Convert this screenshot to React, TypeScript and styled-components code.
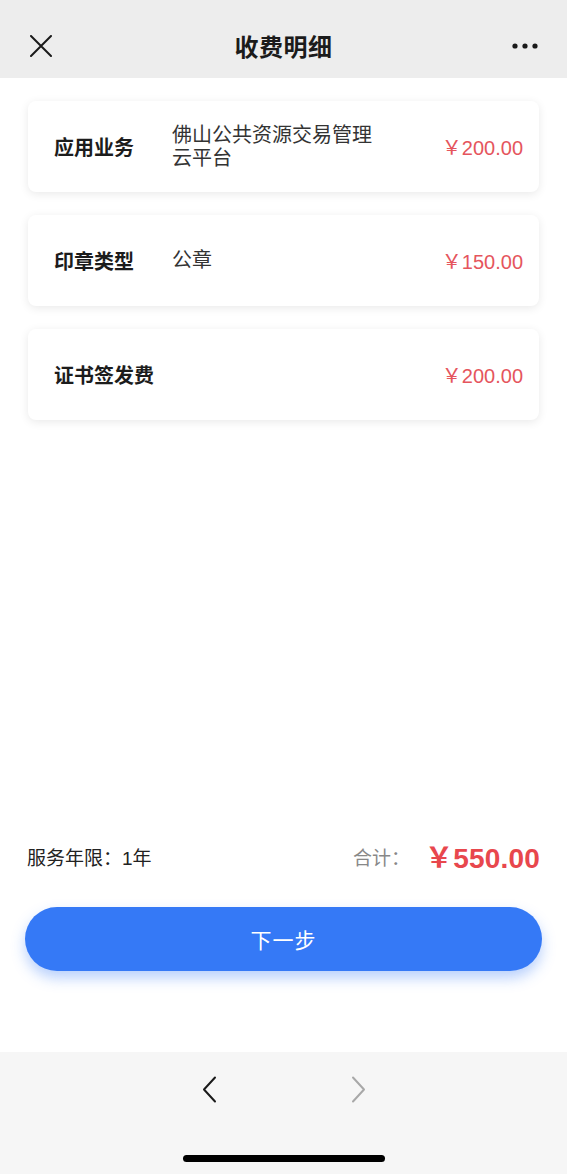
import React from "react";
import styled, { createGlobalStyle } from "styled-components";

const GlobalStyle = createGlobalStyle`
  html, body { margin: 0; padding: 0; background: #ffffff; }
  body { font-family: "Liberation Sans", "Noto Sans CJK SC", sans-serif; }
  * { box-sizing: border-box; }
`;

const Page = styled.div`
  width: 567px;
  height: 1174px;
  display: flex;
  flex-direction: column;
  background: #ffffff;
  overflow: hidden;
`;

const Header = styled.header`
  height: 78px;
  flex: none;
  background: #ededed;
  display: grid;
  grid-template-columns: 80px 1fr 80px;
  align-items: center;
  padding-top: 13px;
`;

const IconSlot = styled.div<{ $align: "start" | "end" }>`
  display: flex;
  justify-content: ${(p) => (p.$align === "start" ? "flex-start" : "flex-end")};
  align-items: center;
  padding-left: ${(p) => (p.$align === "start" ? "30px" : "0")};
  padding-right: ${(p) => (p.$align === "end" ? "28px" : "0")};
`;

const Title = styled.h1`
  margin: 0;
  text-align: center;
  font-size: 24px;
  font-weight: 700;
  color: #1b1b1b;
  letter-spacing: 0.5px;
`;

const Main = styled.main`
  flex: 1;
  padding: 23px 28px 0;
  display: flex;
  flex-direction: column;
  gap: 23px;
`;

const Card = styled.div`
  height: 91px;
  background: #ffffff;
  border-radius: 8px;
  box-shadow: 0 2px 10px rgba(0, 0, 0, 0.09);
  display: flex;
  align-items: center;
  padding: 0 16px 0 26px;
`;

const Label = styled.div<{ $wide?: boolean }>`
  width: ${(p) => (p.$wide ? "auto" : "118px")};
  flex: none;
  font-size: 20px;
  font-weight: 700;
  color: #1c1c1c;
`;

const Value = styled.div`
  flex: 1;
  font-size: 20px;
  line-height: 23px;
  color: #333333;
  max-width: 206px;
`;

const Price = styled.div`
  margin-left: auto;
  font-size: 20px;
  color: #e5555d;
  white-space: nowrap;
`;

const Summary = styled.div`
  flex: none;
  height: 30px;
  margin-bottom: 36px;
  padding: 0 27px;
  display: flex;
  align-items: center;
  justify-content: space-between;
`;

const Term = styled.div`
  font-size: 19px;
  color: #222222;
`;

const TotalGroup = styled.div`
  display: flex;
  align-items: center;
  gap: 15px;
`;

const TotalLabel = styled.span`
  font-size: 19px;
  color: #888888;
`;

const TotalValue = styled.span`
  font-size: 28px;
  font-weight: 700;
  color: #e8474d;
  letter-spacing: 0.2px;
`;

const ButtonWrap = styled.div`
  flex: none;
  padding: 0 25px;
  margin-bottom: 81px;
`;

const NextButton = styled.button`
  width: 100%;
  height: 64px;
  border: none;
  border-radius: 32px;
  background: #3579f6;
  color: #ffffff;
  font-family: inherit;
  font-size: 21px;
  letter-spacing: 1px;
  box-shadow: 0 7px 14px rgba(53, 121, 246, 0.35);
  cursor: pointer;
`;

const BottomBar = styled.nav`
  flex: none;
  height: 122px;
  background: #f6f6f6;
  display: flex;
  flex-direction: column;
  align-items: center;
`;

const NavRow = styled.div`
  display: flex;
  gap: 134px;
  margin-top: 24px;
  height: 26px;
  align-items: center;
`;

const HomeIndicator = styled.div`
  margin-top: 53px;
  width: 202px;
  height: 7px;
  border-radius: 4px;
  background: #000000;
`;

const CloseIcon = () => (
  <svg width="22" height="22" viewBox="0 0 22 22">
    <path d="M1 1 L21 21 M21 1 L1 21" stroke="#1a1a1a" strokeWidth="2" strokeLinecap="round" />
  </svg>
);

const MoreIcon = () => (
  <svg width="28" height="8" viewBox="0 0 28 8">
    <circle cx="4" cy="4" r="2.6" fill="#1a1a1a" />
    <circle cx="14" cy="4" r="2.6" fill="#1a1a1a" />
    <circle cx="24" cy="4" r="2.6" fill="#1a1a1a" />
  </svg>
);

const Chevron = ({ dir, color }: { dir: "left" | "right"; color: string }) => (
  <svg width="15" height="27" viewBox="0 0 15 27">
    <path
      d={dir === "left" ? "M13 1.5 L2 13.5 L13 25.5" : "M2 1.5 L13 13.5 L2 25.5"}
      fill="none"
      stroke={color}
      strokeWidth="2"
      strokeLinecap="round"
      strokeLinejoin="round"
    />
  </svg>
);

const items = [
  { label: "应用业务", value: "佛山公共资源交易管理云平台", price: "￥200.00" },
  { label: "印章类型", value: "公章", price: "￥150.00" },
  { label: "证书签发费", value: "", price: "￥200.00" },
];

export default function App() {
  return (
    <>
      <GlobalStyle />
      <Page>
        <Header>
          <IconSlot $align="start">
            <CloseIcon />
          </IconSlot>
          <Title>收费明细</Title>
          <IconSlot $align="end">
            <MoreIcon />
          </IconSlot>
        </Header>
        <Main>
          {items.map((it) => (
            <Card key={it.label}>
              <Label $wide={!it.value}>{it.label}</Label>
              {it.value && <Value>{it.value}</Value>}
              <Price>{it.price}</Price>
            </Card>
          ))}
        </Main>
        <Summary>
          <Term>服务年限：1年</Term>
          <TotalGroup>
            <TotalLabel>合计：</TotalLabel>
            <TotalValue>￥550.00</TotalValue>
          </TotalGroup>
        </Summary>
        <ButtonWrap>
          <NextButton>下一步</NextButton>
        </ButtonWrap>
        <BottomBar>
          <NavRow>
            <Chevron dir="left" color="#1a1a1a" />
            <Chevron dir="right" color="#a8a8a8" />
          </NavRow>
          <HomeIndicator />
        </BottomBar>
      </Page>
    </>
  );
}
